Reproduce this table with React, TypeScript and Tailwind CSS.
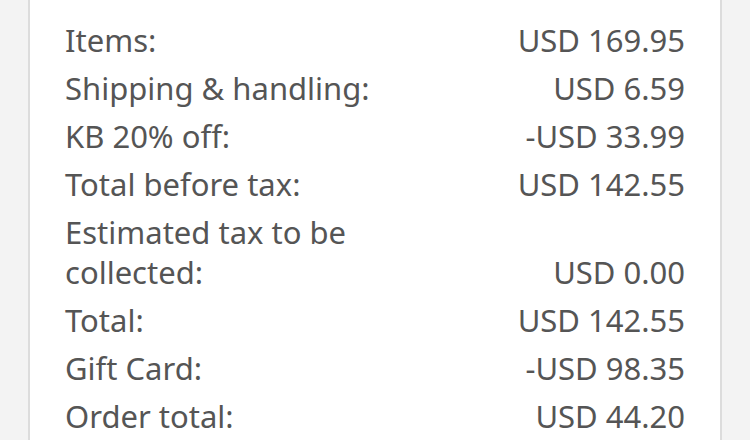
import React from "react";

const rows: [string, string][] = [
  ["Items:", "USD 169.95"],
  ["Shipping & handling:", "USD 6.59"],
  ["KB 20% off:", "-USD 33.99"],
  ["Total before tax:", "USD 142.55"],
  ["Estimated tax to be collected:", "USD 0.00"],
  ["Total:", "USD 142.55"],
  ["Gift Card:", "-USD 98.35"],
  ["Order total:", "USD 44.20"],
];

export default function App() {
  return (
    <div className="w-[750px] h-[440px] overflow-hidden bg-[#f3f3f3] flex" style={{ fontFamily: '"Noto Sans", sans-serif' }}>
      <div className="ml-[28px] w-[694px] h-full bg-white border-x-2 border-[#dcdcdc] pl-[35px] pr-[35px] pt-[16px]">
        {rows.map(([l, v]) => (
          <div key={l} className="flex items-end justify-between py-[4px] text-[31px] leading-[40px] text-[#555]">
            <div className="w-[340px]">{l}</div>
            <div className="text-right">{v}</div>
          </div>
        ))}
      </div>
    </div>
  );
}
